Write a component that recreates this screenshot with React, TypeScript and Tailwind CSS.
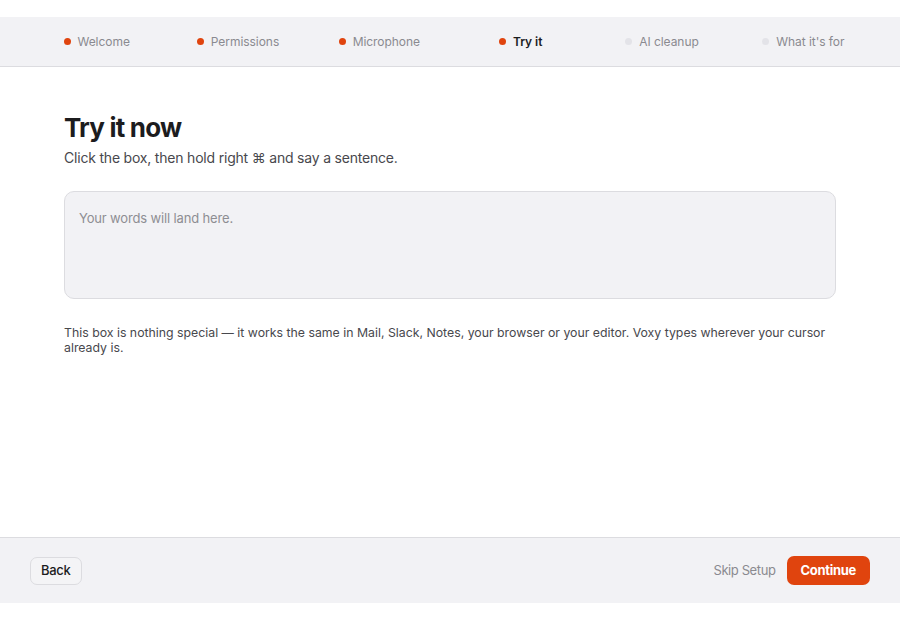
const STEPS = [
  { label: "Welcome", state: "done" },
  { label: "Permissions", state: "done" },
  { label: "Microphone", state: "done" },
  { label: "Try it", state: "current" },
  { label: "AI cleanup", state: "todo" },
  { label: "What it's for", state: "todo" },
] as const;

function Stepper() {
  return (
    <nav className="grid h-[50px] grid-cols-6 items-center border-b border-[#dcdce0] bg-[#f2f2f5] px-[26px]">
      {STEPS.map((step) => (
        <div key={step.label} className="flex items-center justify-center gap-[7px]">
          <span
            className={`h-[7px] w-[7px] rounded-full ${
              step.state === "todo" ? "bg-[#e3e3e8]" : "bg-[#e0440e]"
            }`}
          />
          <span
            className={`text-[12px] tracking-[-0.05px] ${
              step.state === "current" ? "font-semibold text-[#1c1c1e]" : "text-[#8a8a90]"
            }`}
          >
            {step.label}
          </span>
        </div>
      ))}
    </nav>
  );
}

export default function App() {
  return (
    <div
      className="flex h-[620px] w-[900px] flex-col bg-white py-[17px] text-[#1c1c1e]"
      style={{ fontFamily: "Inter, 'Noto Sans', sans-serif" }}
    >
      <Stepper />

      <main className="flex-1 px-16 pt-[45px]">
        <h1 className="text-[26px] font-bold leading-[32px] tracking-[-0.8px] text-[#1c1c1e]">
          Try it now
        </h1>
        <p className="mt-[4px] text-[14px] leading-[20px] tracking-[-0.2px] text-[#48484d]">
          Click the box, then hold right ⌘ and say a sentence.
        </p>

        <div className="mt-[23px] h-[108px] w-[772px] rounded-[10px] border border-[#dcdce0] bg-[#f2f2f5] px-[14px] py-[13px]">
          <span className="text-[13px] tracking-[-0.15px] text-[#8e8e93]">Your words will land here.</span>
        </div>

        <p className="mt-[26px] w-[772px] text-[12.3px] leading-[15px] text-[#48484d]">
          This box is nothing special — it works the same in Mail, Slack, Notes, your browser or your
          editor. Voxy types wherever your cursor already is.
        </p>
      </main>

      <footer className="flex h-[66px] items-center justify-between border-t border-[#dcdce0] bg-[#f2f2f5] px-[30px]">
        <button
          type="button"
          className="h-[28px] rounded-[7px] border border-[#dcdce0] bg-[#f4f4f6] px-[10px] text-[13px] font-medium tracking-[-0.3px] text-[#1c1c1e]"
        >
          Back
        </button>
        <div className="flex items-center gap-[11px]">
          <button type="button" className="text-[13px] tracking-[-0.4px] text-[#8a8a90]">
            Skip Setup
          </button>
          <button
            type="button"
            className="h-[29px] rounded-[7px] bg-[#e0440e] px-[14px] text-[13px] font-bold tracking-[-0.3px] text-white"
          >
            Continue
          </button>
        </div>
      </footer>
    </div>
  );
}
